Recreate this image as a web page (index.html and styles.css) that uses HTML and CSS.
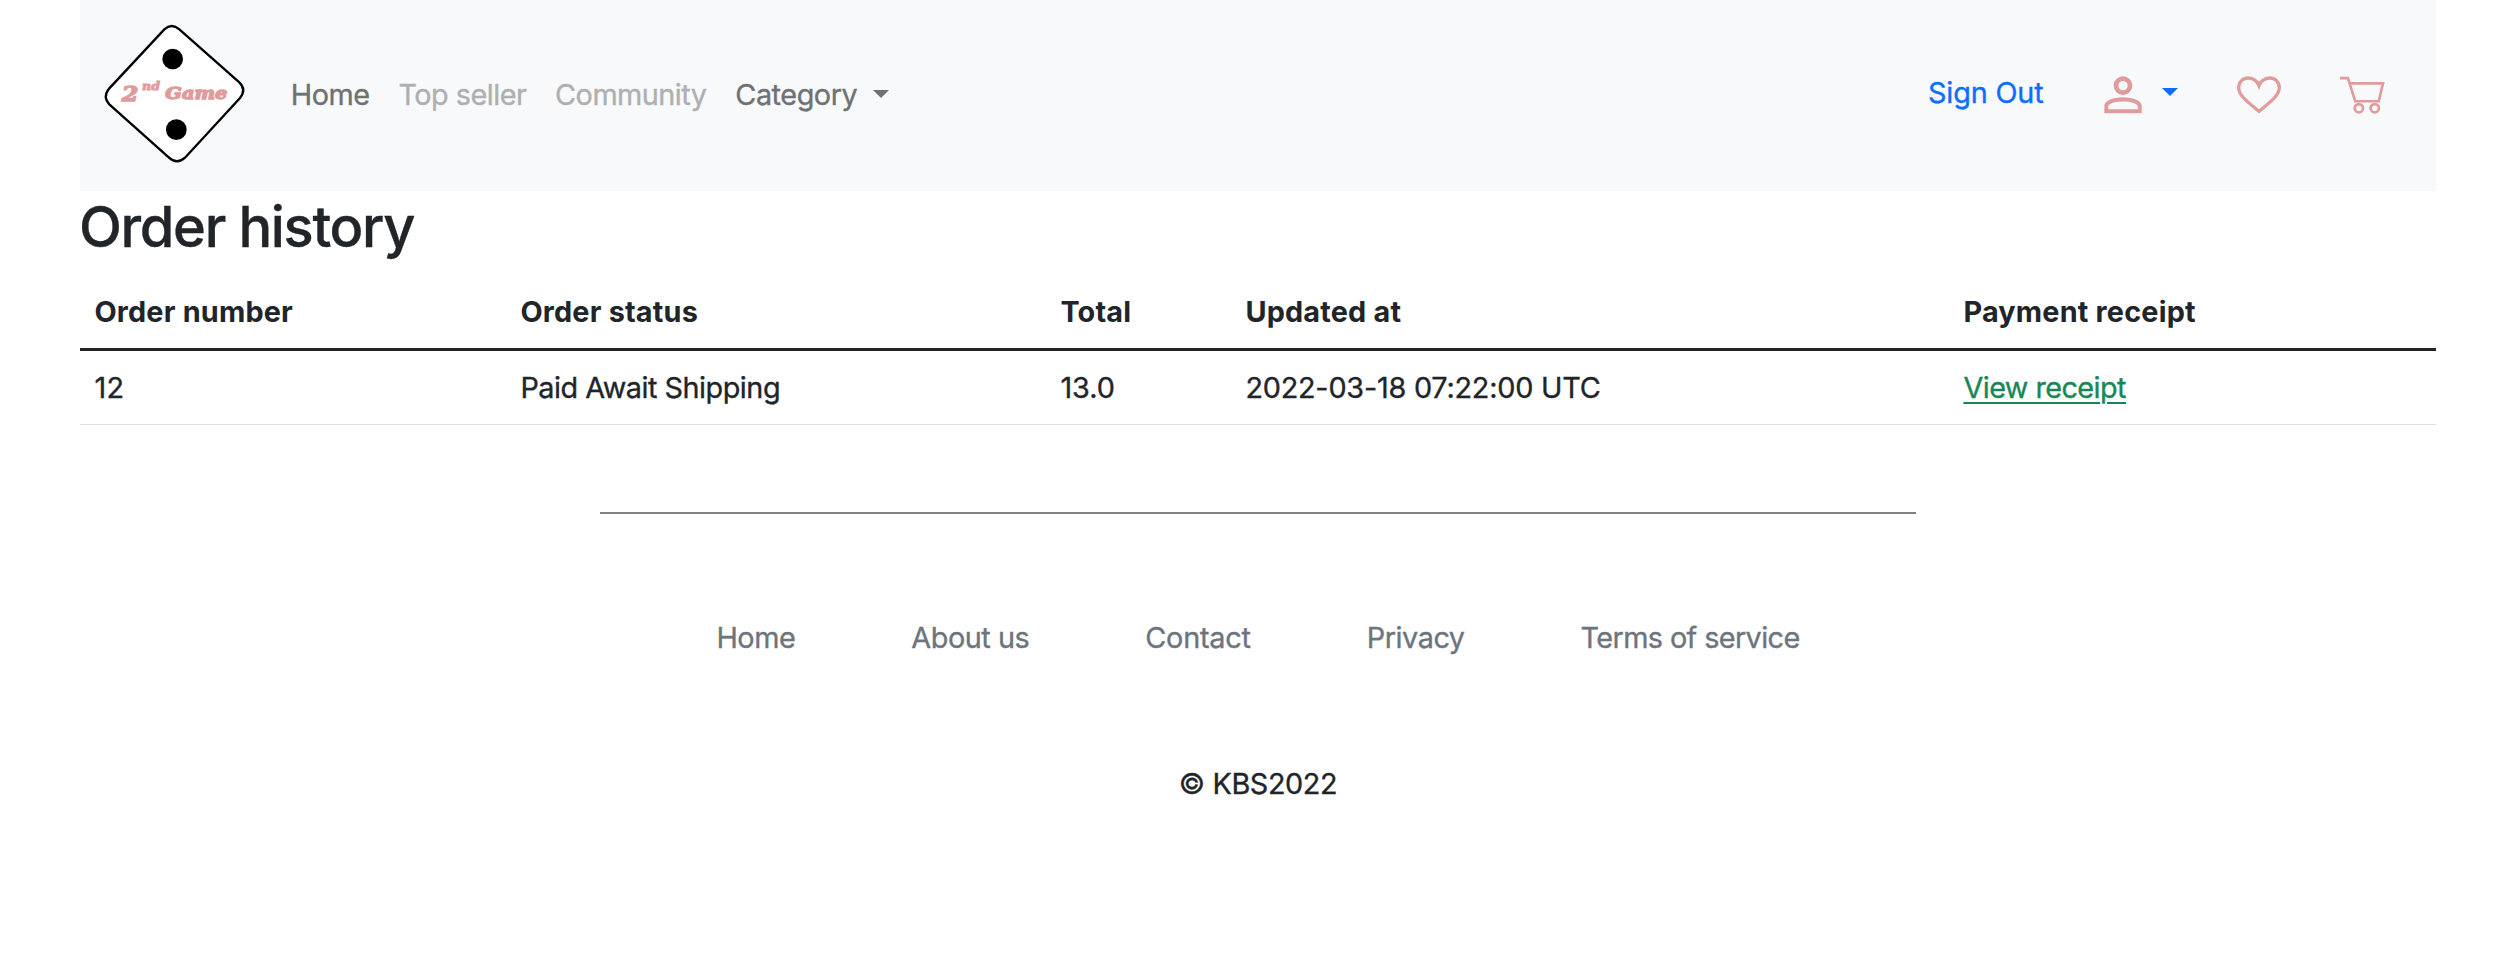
FILE: index.html
```html
<!DOCTYPE html>
<html lang="en">
<head>
<meta charset="utf-8">
<title>Order history</title>
<link rel="stylesheet" href="styles.css">
</head>
<body>
<div class="container">
  <nav class="navbar">
    <a class="brand" href="#">
      <svg class="logo" viewBox="0 0 420 420">
        <path class="tile" d="M178 16Q200-4 223 16L403 175Q425 196 405 222L240 401Q216 423 192 401L13 241Q-8 219 13 193Z"/>
        <circle cx="203" cy="105" r="31"/>
        <circle cx="214" cy="317" r="31"/>
        <g class="wordmark">
          <text x="50" y="231" font-size="60" textLength="50" lengthAdjust="spacingAndGlyphs">2</text>
          <text class="ordinal" x="111" y="199" font-size="33" textLength="54" lengthAdjust="spacingAndGlyphs">nd</text>
          <text x="181" y="226" font-size="50" textLength="186" lengthAdjust="spacingAndGlyphs">Game</text>
        </g>
      </svg>
    </a>
    <div class="links">
      <a class="link" href="#">Home</a>
      <a class="link muted" href="#">Top seller</a>
      <a class="link muted" href="#">Community</a>
      <a class="link" href="#">Category</a>
      <svg class="caret" viewBox="0 0 16 8"><path d="M0 0H16L8 8Z"/></svg>
    </div>
    <div class="actions">
      <a class="signout" href="#">Sign Out</a>
      <svg class="icon person" viewBox="0 0 114 114"><circle cx="57" cy="29" r="21" stroke-width="14"/><path stroke-width="12" d="M7 106V88Q13 72 57 70Q101 72 107 88V106Z"/></svg>
      <svg class="caret blue" viewBox="0 0 16 8"><path d="M0 0H16L8 8Z"/></svg>
      <svg class="icon heart" viewBox="0 0 132 114"><path stroke-width="10" d="M66 106C35 80 5 59 5 35C5 17 18 6 34 6C50 6 62 17 66 28C70 17 82 6 98 6C114 6 127 17 127 35C127 59 97 80 66 106Z"/></svg>
      <svg class="icon cart" viewBox="0 0 136 114"><path stroke-width="8" d="M0 6H24L46 76H117L130 22H29"/><circle cx="57" cy="97" r="12.500" stroke-width="8"/><circle cx="105" cy="97" r="12.500" stroke-width="8"/></svg>
    </div>
  </nav>
  <h1 class="title">Order history</h1>
  <table class="orders">
    <colgroup><col class="c1"><col class="c2"><col class="c3"><col class="c4"><col class="c5"></colgroup>
    <thead><tr><th>Order number</th><th>Order status</th><th>Total</th><th>Updated at</th><th>Payment receipt</th></tr></thead>
    <tbody><tr><td class="number">12</td><td class="status">Paid Await Shipping</td><td>13.0</td><td class="date">2022-03-18 07:22:00 UTC</td><td><a class="receipt" href="#">View receipt</a></td></tr></tbody>
  </table>
  <footer class="footer">
    <hr class="rule">
    <div class="footlinks">
      <a href="#">Home</a>
      <a href="#">About us</a>
      <a class="loose" href="#">Contact</a>
      <a href="#">Privacy</a>
      <a class="tight" href="#">Terms of service</a>
    </div>
    <p class="copy">© KBS2022</p>
  </footer>
</div>
</body>
</html>
```
FILE: styles.css
```css
* { box-sizing: border-box; }
body {
  margin: 0;
  background: #fff;
  color: #212529;
  font: 400 28.8px/43.2px Inter, "Liberation Sans", sans-serif;
  -webkit-text-stroke: .35px currentColor;
}
a { color: inherit; text-decoration: none; -webkit-text-stroke-color: currentColor; }
.container { width: 2356px; margin-left: 80px; }
.navbar {
  display: flex;
  align-items: center;
  height: 191px;
  padding: 0 51px 0 25px;
  background: #f8f9fb;
}
.brand { display: flex; padding-bottom: 3px; }
.logo { width: 140px; height: 140px; overflow: visible; }
.tile { fill: #fff; stroke: #000; stroke-width: 7; }
.wordmark {
  fill: #e09b9b;
  stroke: #e09b9b;
  stroke-width: 4;
  font-family: "DejaVu Serif", serif;
  font-weight: 700;
  font-style: italic;
  -webkit-text-stroke: 0;
}
.wordmark text { stroke: #e09b9b; stroke-width: 4; }
.wordmark .ordinal { stroke-width: 2.5; }
.links {
  display: flex;
  align-items: center;
  gap: 28.8px;
  margin-left: 45.7px;
  padding-bottom: 2px;
  color: #707172;
  letter-spacing: -.45px;
}
.muted { color: #aeafb0; letter-spacing: -.5px; }
.caret { width: 16px; height: 8px; fill: #707172; }
.links .caret { margin: -1px 0 0 -12.6px; }
.actions { display: flex; align-items: center; margin-left: auto; color: #0d6efd; }
.signout { padding-bottom: 6px; letter-spacing: -.15px; }
.caret.blue { fill: #0d6efd; margin: -7px 59px 0 20px; }
.icon { height: 38px; fill: none; stroke: #e09b9b; }
.person { width: 38px; margin-left: 60.5px; }
.heart { width: 44px; margin-right: 59px; }
.cart { width: 45px; }
.title { margin: 2px 0 13.6px -1px; font-size: 56px; line-height: 69px; font-weight: 500; letter-spacing: -1.35px; }
.orders { width: 100%; table-layout: fixed; border-spacing: 0; }
.c1 { width: 426px; }
.c2 { width: 540px; }
.c3 { width: 185px; }
.c4 { width: 718px; }
.orders th, .orders td { padding: 14.8px 14.4px; text-align: left; }
.orders th {
  padding-top: 14.4px;
  font-weight: 700;
  letter-spacing: .2px;
  -webkit-text-stroke: 0;
  border-bottom: 3px solid #212529;
}
.orders td { border-bottom: 1px solid #dee2e6; }
.number { letter-spacing: .5px; }
.status { letter-spacing: -.48px; }
.date { letter-spacing: -.22px; }
.receipt {
  color: #198754;
  letter-spacing: -.55px;
  text-decoration: underline;
  text-decoration-thickness: 2px;
  text-underline-offset: 4px;
}
.footer { padding-top: 87px; }
.rule { width: 1316px; height: 2px; margin: 0 auto; border: 0; background: #808080; }
.footlinks {
  display: flex;
  justify-content: center;
  gap: 116px;
  margin-top: 102px;
  color: #6c757d;
  letter-spacing: -.45px;
}
.loose { letter-spacing: -.2px; }
.tight { letter-spacing: -.6px; }
.copy { margin: 103px 0 0; text-align: center; letter-spacing: -.4px; }
```
